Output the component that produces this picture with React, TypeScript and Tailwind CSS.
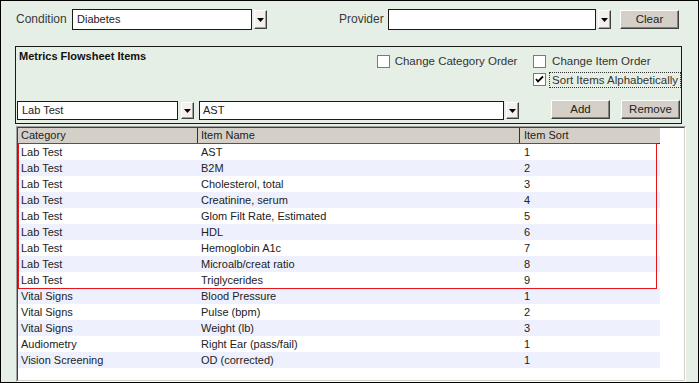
import React from 'react';

const rows = [
  { cat: 'Lab Test', item: 'AST', sort: '1' },
  { cat: 'Lab Test', item: 'B2M', sort: '2' },
  { cat: 'Lab Test', item: 'Cholesterol, total', sort: '3' },
  { cat: 'Lab Test', item: 'Creatinine, serum', sort: '4' },
  { cat: 'Lab Test', item: 'Glom Filt Rate, Estimated', sort: '5' },
  { cat: 'Lab Test', item: 'HDL', sort: '6' },
  { cat: 'Lab Test', item: 'Hemoglobin A1c', sort: '7' },
  { cat: 'Lab Test', item: 'Microalb/creat ratio', sort: '8' },
  { cat: 'Lab Test', item: 'Triglycerides', sort: '9' },
  { cat: 'Vital Signs', item: 'Blood Pressure', sort: '1' },
  { cat: 'Vital Signs', item: 'Pulse (bpm)', sort: '2' },
  { cat: 'Vital Signs', item: 'Weight (lb)', sort: '3' },
  { cat: 'Audiometry', item: 'Right Ear (pass/fail)', sort: '1' },
  { cat: 'Vision Screening', item: 'OD (corrected)', sort: '1' },
];

function DropButton({ className }: { className?: string }) {
  return (
    <div
      className={
        'flex w-[13px] items-center justify-center border border-t-white border-l-white border-r-[#404040] border-b-[#404040] bg-[#f4f0ee] shadow-[inset_-1px_-1px_0_#a0a0a0] ' +
        (className ?? '')
      }
    >
      <svg width="7" height="4" viewBox="0 0 7 4">
        <path d="M0 0h7L3.5 4z" fill="#000" />
      </svg>
    </div>
  );
}

function Button({ label, className }: { label: string; className?: string }) {
  return (
    <div
      className={
        'flex w-[59px] h-[19px] items-center justify-center bg-[#d4d0c8] border border-t-white border-l-white border-r-[#404040] border-b-[#404040] shadow-[inset_-1px_-1px_0_#808080] text-[11.5px] text-[#222] ' +
        (className ?? '')
      }
    >
      {label}
    </div>
  );
}

function Checkbox({ checked }: { checked?: boolean }) {
  return (
    <div className="flex w-[13px] h-[13px] shrink-0 items-center justify-center border border-[#7a7a7a] bg-white">
      {checked && (
        <svg width="9" height="9" viewBox="0 0 9 9">
          <path d="M1 4l2 2.5L8 1.5" stroke="#000" strokeWidth="1.8" fill="none" />
        </svg>
      )}
    </div>
  );
}

export default function App() {
  return (
    <div
      className="flex flex-col w-[699px] h-[383px] overflow-hidden bg-[#e6efe5] border border-black text-[#222]"
      style={{ fontFamily: '"Liberation Sans", Arial, sans-serif' }}
    >
      {/* Condition / Provider */}
      <div className="flex items-start h-[21px] mt-[8px]">
        <div className="ml-[15px] w-[56px] leading-[21px] text-[12px] text-[#3a3a3a]">Condition</div>
        <div className="w-[180px] h-[21px] border border-[#1a1a1a] bg-white pl-[4px] text-[11px] leading-[19px]">Diabetes</div>
        <DropButton className="ml-[2px] h-[19px] mt-[1px]" />
        <div className="ml-[72px] w-[49px] leading-[21px] text-[12px] text-[#3a3a3a]">Provider</div>
        <div className="w-[208px] h-[21px] border border-[#1a1a1a] bg-white"></div>
        <DropButton className="ml-[2px] h-[19px] mt-[1px]" />
        <Button label="Clear" className="ml-[9px] mt-[1px]" />
      </div>

      {/* Metrics Flowsheet Items group */}
      <div className="flex flex-col ml-[14px] mt-[16px] w-[667px] h-[78px] border border-[#1a1a1a]">
        <div className="flex h-[54px]">
          <div className="w-[362px] pl-[3px] pt-[1px] text-[11px] font-bold text-[#111]">Metrics Flowsheet Items</div>
          <div className="w-[157px] pt-[8px]">
            <div className="flex items-center h-[13px]">
              <Checkbox />
              <span className="ml-[5px] whitespace-nowrap text-[11.5px] text-[#333]">Change Category Order</span>
            </div>
          </div>
          <div className="flex flex-col gap-[5px] pt-[8px]">
            <div className="flex items-center h-[13px]">
              <Checkbox />
              <span className="ml-[6px] whitespace-nowrap text-[11.5px] text-[#333]">Change Item Order</span>
            </div>
            <div className="flex items-center h-[13px]">
              <Checkbox checked />
              <span className="ml-[3px] px-[2px] h-[16px] whitespace-nowrap leading-[14px] border border-dotted border-[#333] text-[11.5px] text-[#333]">
                Sort Items Alphabetically
              </span>
            </div>
          </div>
        </div>
        <div className="flex items-start h-[19px]">
          <div className="ml-[1px] w-[161px] h-[19px] border border-[#1a1a1a] bg-white pl-[4px] text-[11px] leading-[17px]">Lab Test</div>
          <DropButton className="ml-[3px] h-[17px] mt-[1px]" />
          <div className="ml-[5px] w-[305px] h-[19px] border border-[#1a1a1a] bg-white pl-[3px] text-[11px] leading-[17px]">AST</div>
          <DropButton className="ml-[2px] h-[17px] mt-[1px]" />
          <Button label="Add" className="ml-[32px] -mt-[1px]" />
          <Button label="Remove" className="ml-[11px] -mt-[1px]" />
        </div>
      </div>

      {/* Items list */}
      <div className="flex-1 ml-[15px] mt-[2px] w-[670px] border border-[#a0a0a0] border-r-white border-b-white">
        <div className="relative h-full border border-[#404040] border-r-[#d4d0c8] border-b-[#d4d0c8] bg-white text-[11px]">
          <div className="flex w-[642px] h-[15px] bg-[#d4d0c8] leading-[15px] text-[#222]">
            <div className="w-[180px] pl-[3px] border-r border-[#333]">Category</div>
            <div className="w-[322px] pl-[3px] border-r border-[#333]">Item Name</div>
            <div className="flex-1 pl-[4px]">Item Sort</div>
          </div>
          <div className="h-px w-[642px] bg-[#333]"></div>
          {rows.map((r, i) => (
            <div
              key={i}
              className={'flex w-[642px] h-[16px] leading-[16px] text-[#222] ' + (i % 2 === 1 ? 'bg-[#eef1fd]' : 'bg-white')}
            >
              <div className="w-[180px] pl-[3px]">{r.cat}</div>
              <div className="w-[322px] pl-[3px]">{r.item}</div>
              <div className="flex-1 pl-[4px]">{r.sort}</div>
            </div>
          ))}
          {/* highlighted lab test block */}
          <div className="absolute left-0 top-[15px] w-[639px] h-[146px] border border-[#e8141c]"></div>
        </div>
      </div>
    </div>
  );
}
